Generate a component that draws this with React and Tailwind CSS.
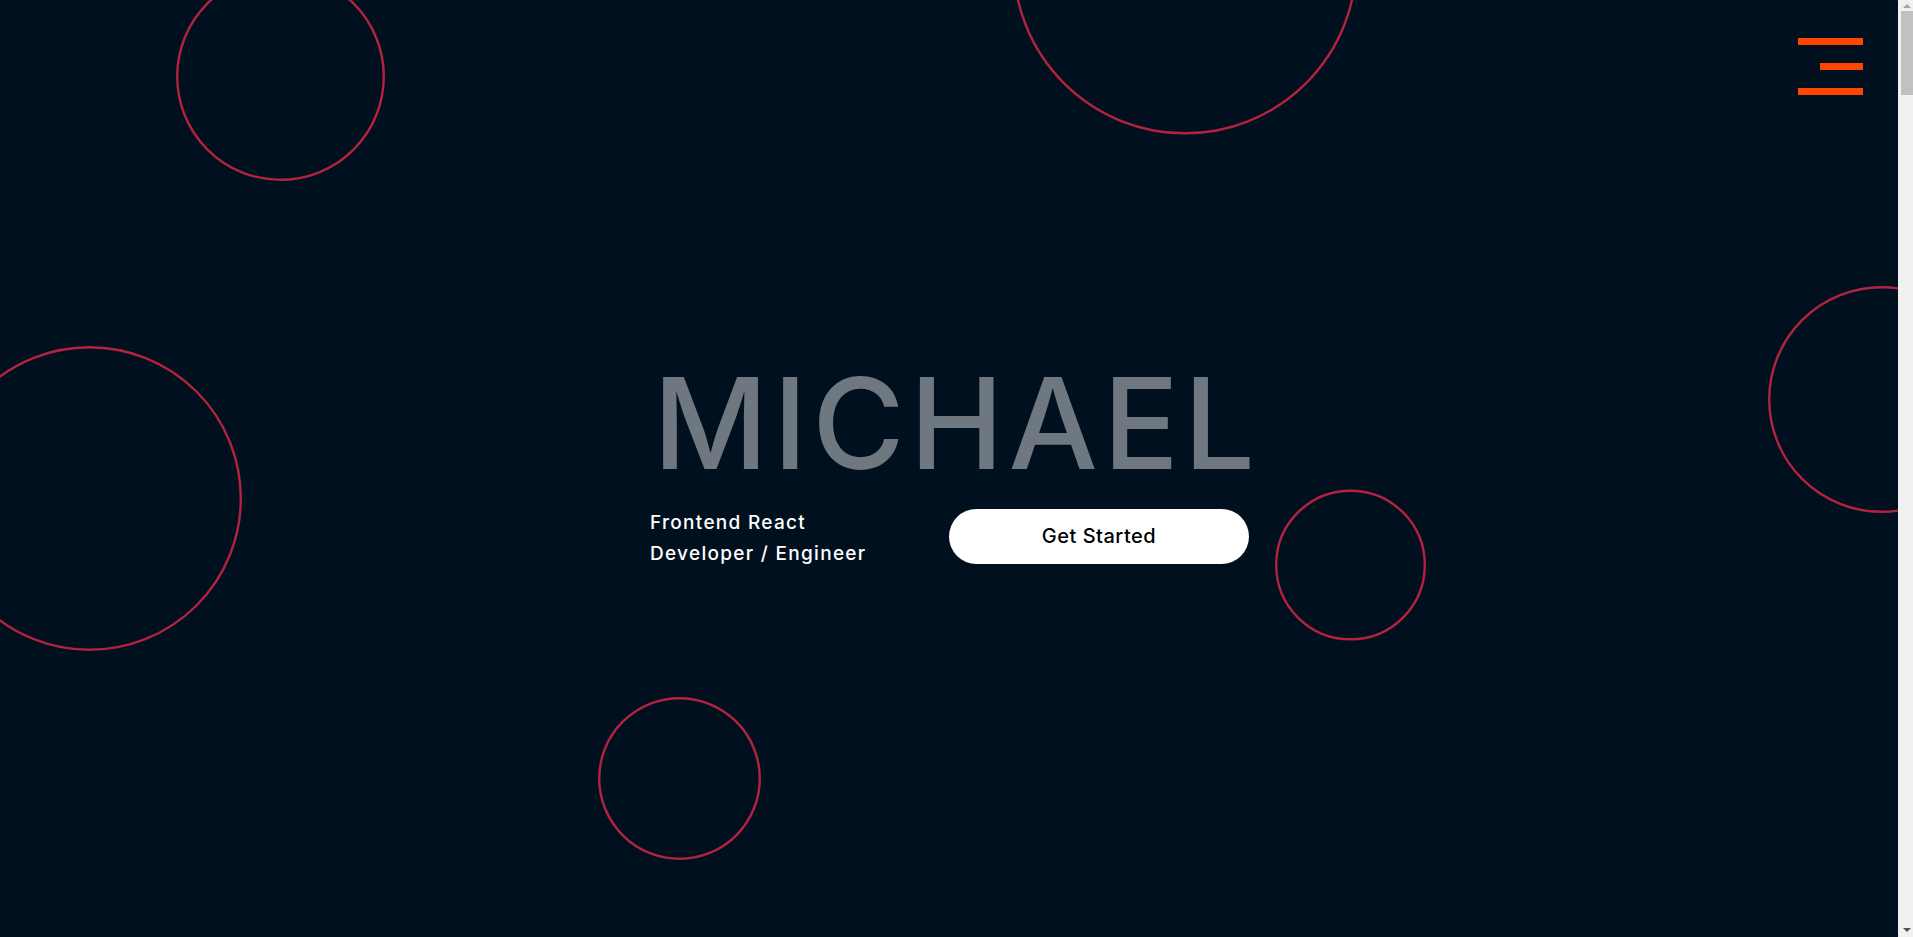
import React from "react";

const circles = [
  { cx: 280.5, cy: 76.5, r: 104.5 },
  { cx: 1185, cy: -38, r: 172.5 },
  { cx: 89.5, cy: 498.5, r: 152.5 },
  { cx: 1881.5, cy: 399.5, r: 113.5 },
  { cx: 1350.5, cy: 565, r: 75.5 },
  { cx: 679.5, cy: 778.5, r: 81.5 },
];

export default function App() {
  return (
    <div
      className="flex h-[937px] w-full overflow-hidden bg-[#01101f]"
      style={{ fontFamily: "Inter, 'Liberation Sans', sans-serif" }}
    >
      <section className="relative flex-1 h-full overflow-hidden flex items-center justify-center">
        <svg className="absolute inset-0 pointer-events-none" width="100%" height="937">
          {circles.map((c, i) => (
            <circle key={i} cx={c.cx} cy={c.cy} r={c.r - 1.2} fill="none" stroke="#b3223f" strokeWidth="2.4" />
          ))}
        </svg>

        <nav className="absolute top-[38px] right-[35px] flex flex-col items-end gap-[18px]">
          <span className="block h-[7px] w-[65px] bg-[#ff4500]" />
          <span className="block h-[7px] w-[43px] bg-[#ff4500]" />
          <span className="block h-[7px] w-[65px] bg-[#ff4500]" />
        </nav>

        <div className="relative w-[598px] -mt-[8px]">
          <h1 className="ml-[3px] whitespace-nowrap text-[126px] leading-none font-medium text-[#6f7780] tracking-[5px]">
            MICHAEL
          </h1>
          <div className="mt-[17px] grid grid-cols-2 items-center">
            <p className="pt-[4px] text-[19px] leading-[31px] font-medium tracking-[1.3px] text-white">
              Frontend React
              <br />
              Developer / Engineer
            </p>
            <button className="h-[55px] w-[300px] rounded-full bg-white text-[20px] font-medium tracking-[0.5px] text-black">
              Get Started
            </button>
          </div>
        </div>
      </section>

      <aside className="flex h-full w-[15px] flex-col bg-[#f1f1f1]">
        <div className="flex h-[11px] items-center justify-center pl-[2px]">
          <span className="block h-0 w-0 border-x-[4px] border-b-[4px] border-x-transparent border-b-[#a3a3a3]" />
        </div>
        <div className="ml-[3px] h-[84px] w-[12px] bg-[#c1c1c1]" />
        <div className="flex-1" />
        <div className="flex h-[14px] items-center justify-center pl-[2px]">
          <span className="block h-0 w-0 border-x-[4px] border-t-[4px] border-x-transparent border-t-[#505050]" />
        </div>
      </aside>
    </div>
  );
}
